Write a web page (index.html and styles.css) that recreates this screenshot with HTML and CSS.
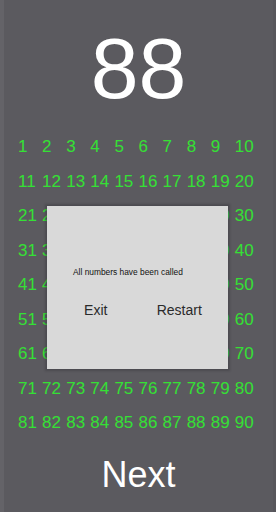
FILE: index.html
```html
<!DOCTYPE html>
<html lang="en">
<head>
    <meta charset="UTF-8">
    <meta name="viewport" content="width=device-width, initial-scale=1.0">
    <title>Bingo Caller</title>
    <link rel="stylesheet" href="styles.css">
</head>
<body>
    <div class="app">
        <div class="current" id="current">88</div>

        <div class="board" id="board">
            <!-- numbers 1..90 are added by the script -->
        </div>

        <button class="next-btn">Next</button>

        <div class="popup">
            <p class="popup-text">All numbers have been called</p>
            <div class="popup-buttons">
                <button>Exit</button>
                <button>Restart</button>
            </div>
        </div>
    </div>

    <script>
        const board = document.getElementById('board');
        for (let i = 1; i <= 90; i++) {
            const cell = document.createElement('span');
            cell.className = 'cell called';
            cell.textContent = i;
            board.appendChild(cell);
        }
    </script>
</body>
</html>
```

FILE: styles.css
```css
body {
    margin: 0;
    font-family: "Liberation Sans", Arial, sans-serif;
    background: #5b5a5f;
    color: #fff;
    overflow: hidden;
}
.app {
    position: relative;
    height: 512px;
    border-left: 4px solid #646368;
    border-right: 3px solid #57565b;
    box-sizing: border-box;
}
.current {
    height: 130px;
    line-height: 136px;
    font-size: 86px;
    text-align: center;
}
.board {
    display: grid;
    grid-template-columns: repeat(10, 24.1px);
    grid-auto-rows: 34.5px;
    margin-left: 14px;
}
.cell {
    font-size: 17px;
    line-height: 34.5px;
    color: #666;
    white-space: nowrap;
}
.cell.called {
    color: #35e035;
}
.next-btn {
    display: block;
    width: 100%;
    height: 68px;
    line-height: 68px;
    padding: 0;
    margin: 0;
    background: none;
    border: none;
    color: #fff;
    font-family: inherit;
    font-size: 36px;
    text-align: center;
}
.popup {
    position: absolute;
    left: 43px;
    top: 206px;
    width: 181px;
    height: 163px;
    background: #d9d9d9;
    box-shadow: 0 0 2px 2px rgba(50, 50, 54, 0.35);
}
.popup-text {
    margin: 0;
    padding: 60px 0 0 26px;
    font-size: 8.4px;
    line-height: 12px;
    color: #111;
}
.popup-buttons {
    display: grid;
    grid-template-columns: 83.5px 83.5px;
    padding: 0 7px;
    margin-top: 22px;
}
.popup-buttons button {
    background: none;
    border: none;
    padding: 0;
    height: 20px;
    line-height: 20px;
    font-family: inherit;
    font-size: 14px;
    color: #2a2a2a;
    cursor: pointer;
}
```
